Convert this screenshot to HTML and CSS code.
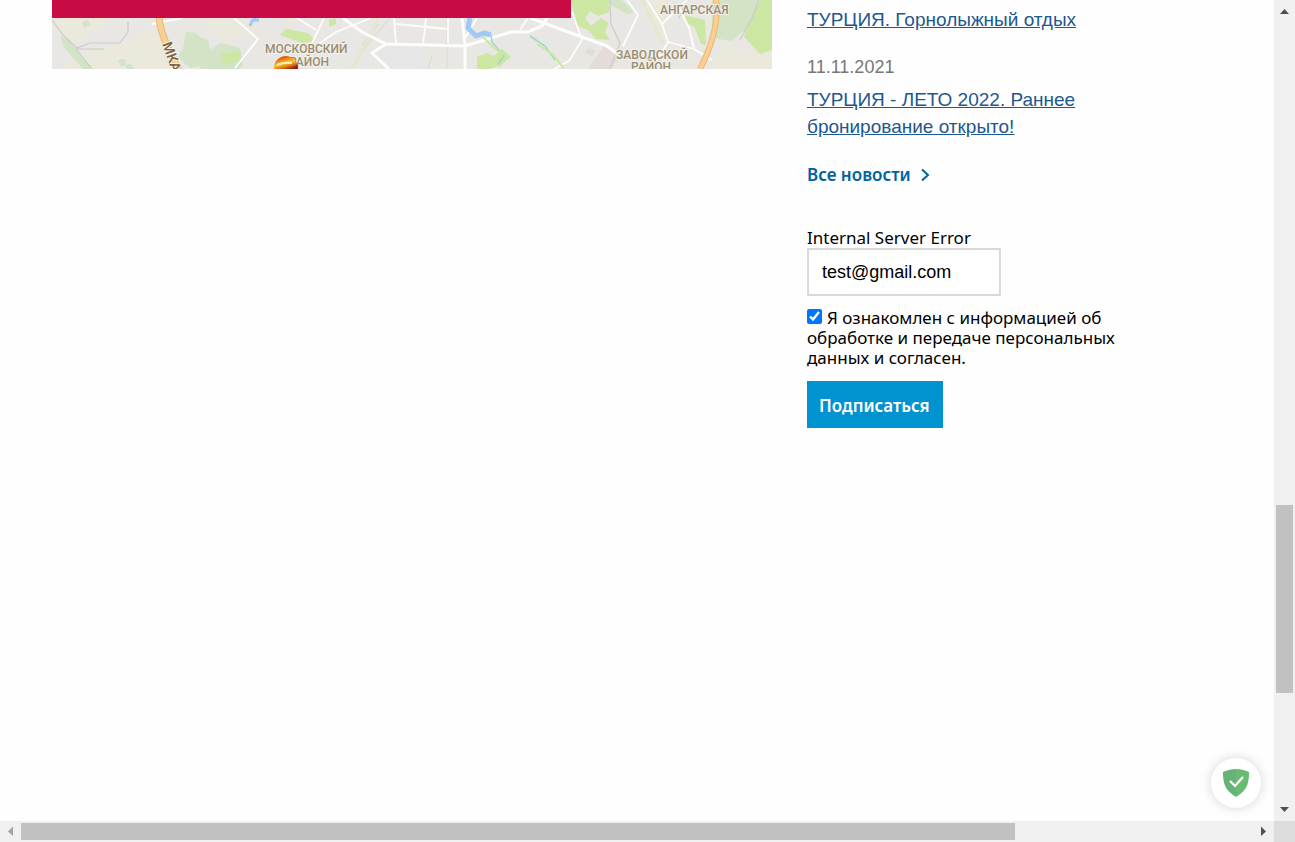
FILE: index.html
```
<!DOCTYPE html>
<html lang="ru">
<head>
<meta charset="utf-8">
<title>Новости</title>
<link rel="stylesheet" href="styles.css">
</head>
<body>
<div class="shell">
<main class="page">
  <section class="map">
    <svg class="map-picture" viewBox="0 0 720 69" preserveAspectRatio="xMinYMin slice" role="img" aria-label="Карта">
      <rect width="720" height="69" fill="#e8e7e3"/>
      <path fill="#ebe8dc" d="M0 18H60L38 32L22 48L0 24ZM8 69L38 50L72 43L100 27L118 69ZM150 18H190L205 35L170 42ZM232 18H250L236 26ZM590 0H615L610 30L620 45L600 28ZM660 69L672 40L695 54L720 46V69Z"/>
      <path fill="#e7e6e7" d="M328 46L370 49L372 69H335L322 55Z"/>
      <path fill="#d2e4c5" d="M30 22l6-2 2 5-6 3ZM8 36l9 5 24 28H31L12 47ZM66 60l7-1 2 6-6 1ZM74 66l5-3 3 6h-8ZM126 57l5-9 3-16 9 1 7 5 6 2 2 10 11-7 19 5 3 18-10 6H152l-5-6-9 2ZM546 0h24l12 12-7 2-16-9ZM660 0H720V30L690 32L680 41L660 38Z"/>
      <path fill="#cbe7a2" d="M169 54l20-3-2 10-16 4ZM229 33l9-4 4 9-10-2ZM228 35l6-6 22 4 8 8-14 2ZM277 20l7-2v6l-7 3ZM425 57l10-4 7 3 8-7 9 8-11 8-10 4h-13ZM518 0h18l3 10-6 8 6 8 10-8 8 5-4 9 5 8-14-1-8-9-10-4ZM534 0h22l2 12-12 4-11-7ZM632 15l8 2 13 3 1 25-5-1-6-16-9-6ZM709 0h11v50l-12 4-16-17 8-21Z"/>
      <path fill="#e5dcd9" d="M552 46l15 12-8 11h-23ZM536 48l8 2-4 6-7-3Z"/>
      <g fill="none" stroke="#cbcbcd" stroke-width="1.2">
        <path d="M0 20L12 36L25 48L38 43L68 43L76 32V22M24 49H52M24 49L39 68M558 0L559 24L568 43L558 69M634 0L627 18M707 0L700 18L688 40"/>
        <path d="M338 18L315 45L300 69M327 24L310 45M380 55L376 69M395 18V69" stroke="#dedcd6"/>
      </g>
      <path fill="none" stroke="#e9e5cf" stroke-width="3" d="M326 19L317 38L299 69M590 0L604 29L611 44"/>
      <g fill="none" stroke="#fdfdfc" stroke-width="1.8" stroke-linejoin="round">
        <path d="M100 24L130 18M182 18L206 39L183 68M245 18L264 30M272 18L254 56M265 45L284 32L319 18M342 18L344 43M344 24L396 29M374 18L371 45M396 18V43M468 30L476 18M425 18L413 38M575 0L586 15L571 46M595 0L610 24L635 0M610 24L616 42L610 52L600 69M616 42L642 49L660 60M642 49L637 28L626 5M530 40L517 61L502 69M530 40L520 12"/>
        <path stroke-width="3" d="M291 18L310 32L334 44L378 45L413 46L459 32L478 32M334 44L320 53L337 69M410 18L413 45V69M478 18L530 37L555 46L571 58M478 31L490 26L499 11L490 0"/>
      </g>
      <path fill="none" stroke="#9ec9fb" stroke-width="3" stroke-linejoin="round" d="M204 18l-4 3-2 5M200 20h7"/>
      <path fill="none" stroke="#9ec9fb" stroke-width="5" stroke-linejoin="round" d="M418 18L416 28L424 36L432 33L439 35"/>
      <path fill="none" stroke="#9ed7cf" stroke-width="1.6" d="M439 35L440 42L452 56L446 64M478 36L493 46L503 60"/>
      <path fill="none" stroke="#cbe7a2" stroke-width="2" d="M430 36L443 49L456 57L446 67M485 44L500 54L512 68"/>
      <g fill="none"><path d="M107 17Q108 35 127 70" stroke="#eab770" stroke-width="7"/><path d="M107 17Q108 35 127 70" stroke="#f9cf93" stroke-width="5"/><path d="M664 0Q668 30 648 69" stroke="#eab770" stroke-width="6"/><path d="M664 0Q668 30 648 69" stroke="#f9cf93" stroke-width="4"/></g>
      <g class="map-names"><text x="213" y="53">МОСКОВСКИЙ</text><text x="237" y="66">РАЙОН</text><text x="608" y="14">АНГАРСКАЯ</text><text x="564" y="59">ЗАВОДСКОЙ</text><text x="579" y="71">РАЙОН</text><text class="map-road" transform="translate(110 44) rotate(70)">МКА</text></g>
      <defs><linearGradient id="ball" x1="232" y1="56" x2="236" y2="70" gradientUnits="userSpaceOnUse"><stop offset="0" stop-color="#d84808"/><stop offset=".25" stop-color="#ee8a1c"/><stop offset=".5" stop-color="#f7c82c"/><stop offset=".7" stop-color="#e5861c"/><stop offset="1" stop-color="#a11d10"/></linearGradient></defs>
      <circle cx="234" cy="68" r="12" fill="url(#ball)"/>
      <path d="M225 65Q231 62 240 63" fill="none" stroke="#fff2b0" stroke-width="2"/>
      <path d="M237 69Q244 68 245 64L246 69Z" fill="#8a2415"/>
    </svg>
    <div class="map-banner"></div>
  </section>
  <aside class="side">
    <a class="news-link" href="#">ТУРЦИЯ. Горнолыжный отдых</a>
    <time class="news-date" datetime="2021-11-11">11.11.2021</time>
    <a class="news-link" href="#">ТУРЦИЯ - ЛЕТО 2022. Раннее бронирование открыто!</a>
    <a class="all-news" href="#">Все новости <svg width="9" height="14" viewBox="0 0 9 14" aria-hidden="true"><path d="M1 1.5L7 7L1 12.5" fill="none" stroke="#0063a1" stroke-width="2"/></svg></a>
    <form class="subscribe">
      <label class="status" for="email">Internal Server Error</label>
      <input class="email" id="email" type="email" value="test@gmail.com">
      <div class="consent"><input class="tick" id="agree" type="checkbox" checked><label for="agree">Я ознакомлен с информацией об обработке и передаче персональных данных и согласен.</label></div>
      <button class="submit" type="button">Подписаться</button>
    </form>
  </aside>
  <button class="shield" type="button" aria-label="Защита">
    <svg width="26" height="28" viewBox="0 0 26 28" aria-hidden="true"><path d="M13 0C9 0 4 1 0 3C0 13 1 21 13 28Z" fill="#67b279"/><path d="M13 0C17 0 22 1 26 3C26 13 25 21 13 28Z" fill="#68bc71"/><path d="M7 12L12 17L20 8" fill="none" stroke="#fff" stroke-width="2.2"/></svg>
  </button>
</main>
<div class="bar bar-v"><svg class="arrow" viewBox="0 0 21 21"><path d="M6 14H15L10.500 9Z"/></svg><div class="rail"><div class="thumb"></div></div><svg class="arrow" viewBox="0 0 21 21"><path d="M6 7H15L10.500 12Z"/></svg></div>
<div class="bar bar-h"><svg class="arrow arrow-off" viewBox="0 0 21 21"><path d="M13 5.500V15L8 10.500Z"/></svg><div class="rail"><div class="thumb"></div></div><svg class="arrow" viewBox="0 0 21 21"><path d="M8 5.500V15L13 10.500Z"/></svg></div>
<div class="corner"></div>
</div>
</body>
</html>
```
FILE: styles.css
```
* { box-sizing: border-box; }
body { margin: 0; background: #fefefe; color: #000; font: 17px/20px "Noto Sans", sans-serif; }
.shell { display: grid; grid-template: minmax(0, 1fr) 21px / minmax(0, 1fr) 21px; height: 100vh; overflow: hidden; }
.page { position: relative; display: flex; align-items: flex-start; gap: 35px; padding-left: 52px; overflow: hidden; }
.map { position: relative; flex: 0 1 720px; }
.map-picture { display: block; width: 100%; height: 69px; }
.map-banner { position: absolute; top: 0; left: 0; width: 72.1%; height: 18px; background: #c90b45; }
.map-names { font: 500 12px Roboto, sans-serif; fill: #998c73; stroke: #f3f1eb; stroke-width: 2px; paint-order: stroke; }
.map-names .map-road { font-size: 14px; fill: #806040; }
.side { display: flex; flex-direction: column; align-items: flex-start; flex: 0 0 330px; padding-top: 6px; }
.news-link { max-width: 290px; color: #1d588f; font: 19px/27px "Liberation Sans", sans-serif; }
.news-date { margin: 21px 0 5px; color: #777; font: 18px/27px "Liberation Sans", sans-serif; }
.all-news { display: flex; align-items: center; gap: 10px; margin-top: 25px; color: #0063a1; font-weight: 600; text-decoration: none; }
.subscribe { display: flex; flex-direction: column; align-items: flex-start; margin-top: 43px; }
.email { width: 194px; height: 48px; padding: 0 13px; border: 2px solid #d9d9d9; background: #fff; color: #000; font: 18px "Liberation Sans", sans-serif; }
.consent { margin: 12px 0 13px; }
.tick { width: 15px; height: 15px; margin: 0 5px 0 0; accent-color: #0075ff; }
.submit { height: 47px; padding: 3px 13px 0 12px; border: 0; background: #0093d0; color: #fff; font: 600 17px/20px "Noto Sans", sans-serif; }
.shield { position: absolute; right: 13px; bottom: 13px; display: grid; place-items: center; width: 50px; height: 50px; padding: 0; border: 0; border-radius: 50%; background: #fff; box-shadow: 0 0 12px rgba(0, 0, 0, .16); }
.bar { display: flex; background: #f0f0f0; }
.bar-v { flex-direction: column; }
.bar-h { grid-row: 2; }
.corner { grid-row: 2; background: #dcdcdc; }
.arrow { flex: none; width: 21px; height: 21px; fill: #505050; }
.arrow-off { fill: #a3a3a3; }
.rail { display: flex; flex: 1; }
.bar-v .rail { flex-direction: column; padding: 0 2px; }
.bar-h .rail { padding: 2px 0; }
.thumb { background: #c1c1c1; }
.bar-v .thumb { height: 24.1%; margin-top: auto; margin-bottom: 107px; }
.bar-h .thumb { width: 80.7%; }
```
